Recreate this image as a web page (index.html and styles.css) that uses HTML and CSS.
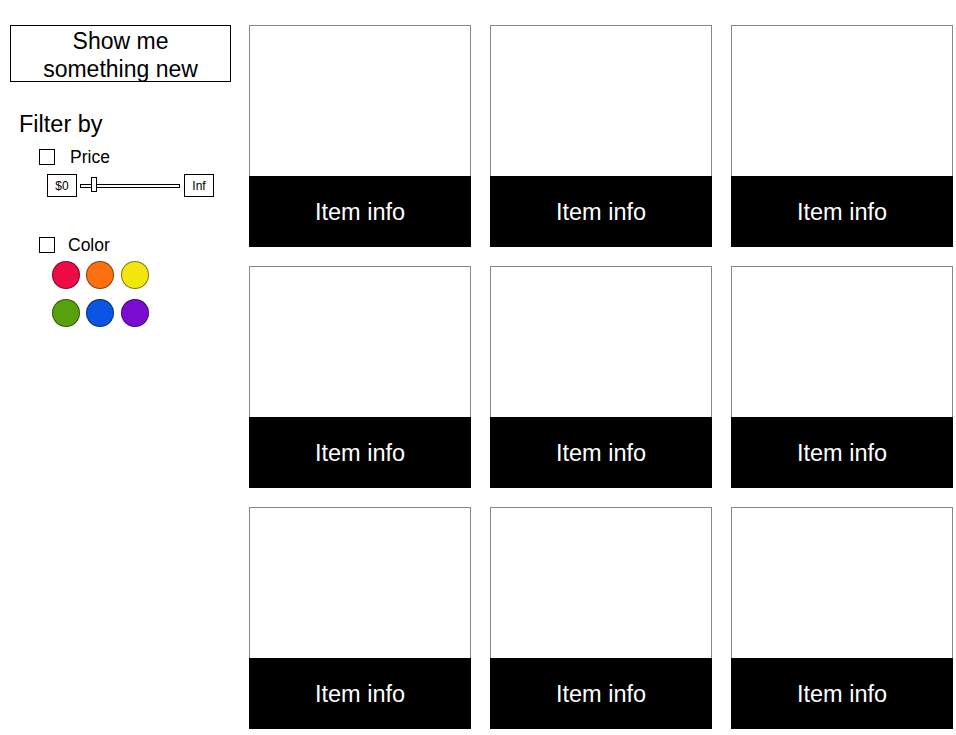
FILE: index.html
```html
<!DOCTYPE html>
<html lang="en">
<head>
<meta charset="utf-8">
<title>Shop</title>
<link rel="stylesheet" href="styles.css">
</head>
<body>
<div class="page">
  <aside class="sidebar">
    <button class="new-btn">Show me something new</button>
    <div class="filters">
      <h2 class="filter-title">Filter by</h2>
      <div class="filter-group">
        <label class="check-row"><span class="checkbox"></span><span class="check-label">Price</span></label>
        <div class="slider-row">
          <span class="bound">$0</span>
          <div class="track"><span class="thumb"></span></div>
          <span class="bound">Inf</span>
        </div>
      </div>
      <div class="filter-group color-group">
        <label class="check-row check-row--tight"><span class="checkbox"></span><span class="check-label">Color</span></label>
        <div class="swatches">
          <span class="swatch red"></span>
          <span class="swatch orange"></span>
          <span class="swatch yellow"></span>
          <span class="swatch green"></span>
          <span class="swatch blue"></span>
          <span class="swatch purple"></span>
        </div>
      </div>
    </div>
  </aside>
  <main class="grid">
    <div class="card"><div class="card-info">Item info</div></div>
    <div class="card"><div class="card-info">Item info</div></div>
    <div class="card"><div class="card-info">Item info</div></div>
    <div class="card"><div class="card-info">Item info</div></div>
    <div class="card"><div class="card-info">Item info</div></div>
    <div class="card"><div class="card-info">Item info</div></div>
    <div class="card"><div class="card-info">Item info</div></div>
    <div class="card"><div class="card-info">Item info</div></div>
    <div class="card"><div class="card-info">Item info</div></div>
  </main>
</div>
</body>
</html>
```

FILE: styles.css
```css
* { box-sizing: border-box; }

html, body {
  margin: 0;
  padding: 0;
  background: #fff;
}

body {
  font-family: "Liberation Sans", Arial, Helvetica, sans-serif;
  color: #000;
}

.page {
  display: flex;
  align-items: flex-start;
  padding-top: 25px;
}

.sidebar {
  width: 221px;
  margin-left: 10px;
  margin-right: 18px;
  flex: none;
}

.new-btn {
  display: block;
  width: 221px;
  height: 57px;
  margin: 0;
  padding: 1px 10px 0;
  border: 1px solid #000;
  background: #fff;
  font-family: inherit;
  font-size: 23px;
  line-height: 28px;
  color: #000;
  text-align: center;
}

.filters {
  padding-left: 9px;
  margin-top: 28px;
}

.filter-title {
  margin: 0;
  font-size: 23.5px;
  font-weight: normal;
  line-height: 28px;
}

.filter-group {
  margin-top: 11px;
  padding-left: 20px;
}

.color-group {
  margin-top: 40px;
}

.check-row {
  display: flex;
  align-items: center;
  gap: 15px;
  height: 16px;
}

.check-row--tight {
  gap: 13px;
}

.checkbox {
  width: 16px;
  height: 16px;
  border: 1px solid #000;
  background: #fff;
  flex: none;
}

.check-label {
  font-size: 17.5px;
  line-height: 16px;
}

.slider-row {
  display: flex;
  align-items: center;
  margin-top: 9px;
  margin-left: 8px;
}

.bound {
  display: flex;
  align-items: center;
  justify-content: center;
  width: 30px;
  height: 23px;
  border: 1px solid #000;
  font-size: 12px;
}

.track {
  position: relative;
  width: 100px;
  height: 4px;
  margin: 0 4px 0 3px;
  border: 1px solid #000;
  background: #fff;
}

.thumb {
  position: absolute;
  left: 10px;
  top: -8px;
  width: 6px;
  height: 15px;
  border: 1px solid #000;
  background: #fff;
}

.swatches {
  display: grid;
  grid-template-columns: repeat(3, 28px);
  column-gap: 6.3px;
  row-gap: 10px;
  margin-top: 8px;
  margin-left: 13px;
}

.swatch {
  width: 28px;
  height: 28px;
  border-radius: 50%;
  border: 1px solid rgba(0, 0, 0, 0.45);
}

.red { background: #ee0a45; }
.orange { background: #fd700f; }
.yellow { background: #f3e50e; }
.green { background: #58a10c; }
.blue { background: #0a56e3; }
.purple { background: #7a0bd1; }

.grid {
  display: grid;
  grid-template-columns: repeat(3, 222px);
  grid-auto-rows: 222px;
  gap: 19px;
}

.card {
  display: flex;
  flex-direction: column;
  justify-content: flex-end;
  border: 1px solid #888;
  border-bottom: none;
  background: #fff;
}

.card-info {
  height: 71px;
  margin: 0 -1px;
  padding-top: 2px;
  background: #000;
  color: #fff;
  font-size: 23.5px;
  display: flex;
  align-items: center;
  justify-content: center;
}
```
